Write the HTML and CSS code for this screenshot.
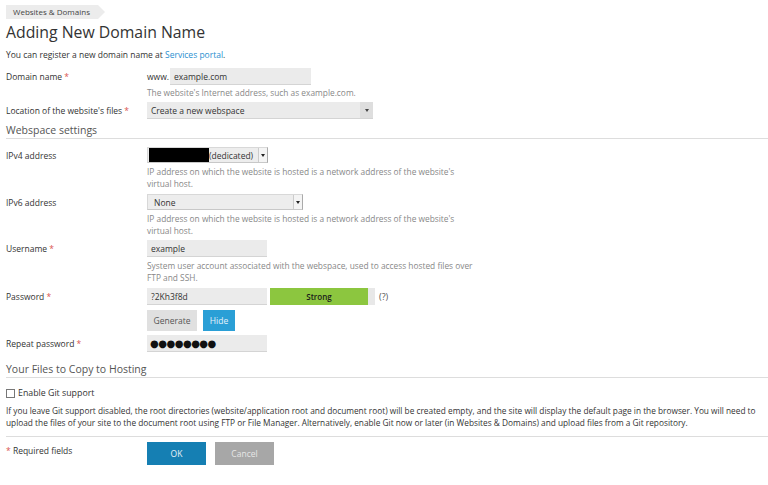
FILE: index.html
```html
<!DOCTYPE html>
<html lang="en">
<head>
<meta charset="utf-8">
<title>Adding New Domain Name</title>
<link rel="stylesheet" href="styles.css">
</head>
<body>
<div class="page">
  <div class="crumbs"><span class="crumb">Websites &amp; Domains</span></div>
  <h1 class="title">Adding New Domain Name</h1>
  <p class="intro">You can register a new domain name at <a class="link" href="#">Services portal</a>.</p>

  <div class="row row-domain">
    <div class="label">Domain name <span class="req">*</span></div>
    <div class="field">
      <div class="inline">
        <span class="prefix">www.</span>
        <div class="input input-domain">example.com</div>
      </div>
      <div class="hint">The website's Internet address, such as example.com.</div>
    </div>
  </div>

  <div class="row row-location">
    <div class="label">Location of the website's files <span class="req">*</span></div>
    <div class="field">
      <div class="select select-location"><span class="sel-text">Create a new webspace</span><span class="sel-arrow"><span class="caret"></span></span></div>
    </div>
  </div>

  <div class="section section-webspace">Webspace settings</div>

  <div class="row row-ipv4">
    <div class="label">IPv4 address</div>
    <div class="field">
      <div class="native native-ipv4"><span class="redact"></span><span class="native-text">(dedicated)</span><span class="native-btn"><span class="caret small"></span></span></div>
      <div class="hint">IP address on which the website is hosted is a network address of the website's<br>virtual host.</div>
    </div>
  </div>

  <div class="row row-ipv6">
    <div class="label">IPv6 address</div>
    <div class="field">
      <div class="native native-ipv6"><span class="native-text pad">None</span><span class="native-btn"><span class="caret small"></span></span></div>
      <div class="hint">IP address on which the website is hosted is a network address of the website's<br>virtual host.</div>
    </div>
  </div>

  <div class="row row-user">
    <div class="label">Username <span class="req">*</span></div>
    <div class="field">
      <div class="input input-std">example</div>
      <div class="hint">System user account associated with the webspace, used to access hosted files over<br>FTP and SSH.</div>
    </div>
  </div>

  <div class="row row-pass">
    <div class="label">Password <span class="req">*</span></div>
    <div class="field">
      <div class="inline">
        <div class="input input-std">?2Kh3f8d</div>
        <div class="strength"><span class="strength-bar">Strong</span><span class="strength-rest"></span></div>
        <span class="qmark">(?)</span>
      </div>
      <div class="btns">
        <span class="btn btn-gen">Generate</span>
        <span class="btn btn-hide">Hide</span>
      </div>
    </div>
  </div>

  <div class="row row-repeat">
    <div class="label">Repeat password <span class="req">*</span></div>
    <div class="field">
      <div class="input input-std dots">&#9679;&#9679;&#9679;&#9679;&#9679;&#9679;&#9679;&#9679;</div>
    </div>
  </div>

  <div class="section section-files">Your Files to Copy to Hosting</div>

  <label class="check"><span class="box"></span>Enable Git support</label>
  <p class="note">If you leave Git support disabled, the root directories (website/application root and document root) will be created empty, and the site will display the default page in the browser. You will need to upload the files of your site to the document root using FTP or File Manager. Alternatively, enable Git now or later (in Websites &amp; Domains) and upload files from a Git repository.</p>

  <div class="footer">
    <div class="label"><span class="req">*</span> Required fields</div>
    <div class="actions">
      <span class="btn-lg btn-ok">OK</span>
      <span class="btn-lg btn-cancel">Cancel</span>
    </div>
  </div>
</div>
</body>
</html>
```

FILE: styles.css
```css
* { box-sizing: border-box; }
html, body { margin: 0; padding: 0; background: #fff; }
body {
  font-family: "Open Sans", "DejaVu Sans", sans-serif;
  font-size: 8.5px;
  color: #333;
}
.page { padding: 5px 0 0 6px; }

.crumbs { height: 14px; }
.crumb {
  display: inline-block;
  position: relative;
  height: 14px;
  line-height: 14px;
  padding: 0 8px 0 7px;
  background: #ececec;
  color: #444;
  font-size: 8px;
}
.crumb::after {
  content: "";
  position: absolute;
  right: -7px;
  top: 0;
  border-top: 7px solid transparent;
  border-bottom: 7px solid transparent;
  border-left: 7px solid #ececec;
}

.title {
  margin: 0;
  font-size: 15.8px;
  font-weight: 400;
  line-height: 24px;
  color: #333;
  margin-top: 1px;
}
.intro { margin: 5px 0 0; line-height: 12px; }
.link { color: #2a8fd0; text-decoration: none; }
.req { color: #d9534f; }

.row {
  display: grid;
  grid-template-columns: 141px 1fr;
}
.label { line-height: 17px; }
.field { display: flex; flex-direction: column; align-items: flex-start; }
.inline { display: flex; align-items: center; }
.hint { color: #888; line-height: 12px; margin-top: 2px; font-size: 8.35px; }

.input {
  height: 17px;
  line-height: 17px;
  background: #ebebeb;
  border-bottom: 1px solid #d4d4d4;
  padding: 0 4px;
  color: #333;
}
.prefix { width: 23px; }
.input-domain { width: 141px; }
.input-std { width: 120px; }

.row-domain { margin-top: 7px; }
.row-location { margin-top: 3px; }

.select {
  display: flex;
  width: 226px;
  height: 17px;
  line-height: 17px;
  background: #ebebeb;
  border-bottom: 1px solid #d4d4d4;
}
.sel-text { flex: 1; padding-left: 4px; }
.sel-arrow {
  width: 13px;
  background: #dedede;
  display: flex; align-items: center; justify-content: center;
}
.caret {
  width: 0; height: 0;
  border-left: 2.5px solid transparent;
  border-right: 2.5px solid transparent;
  border-top: 3px solid #444;
}

.section {
  font-size: 10.5px;
  color: #555;
  line-height: 15px;
  border-bottom: 1px solid #ddd;
}
.section-webspace { margin-top: 4px; }

.row-ipv4 { margin-top: 8px; }
.native {
  display: flex;
  align-items: stretch;
  height: 16px;
  line-height: 15px;
  background: #ededed;
  border: 1px solid #d8d8d8;
  border-right: 1px solid #aaa;
  border-bottom: 1px solid #c8c8c8;
}
.native-ipv4 { width: 121px; }
.native-ipv6 { width: 156px; }
.redact { width: 60px; margin: 0 0 0 1px; background: #000; }
.native-text { flex: 1; color: #333; }
.native-text.pad { padding-left: 6px; }
.native-btn {
  width: 9px;
  background: #f4f4f4;
  border-left: 1px solid #ccc;
  display: flex; align-items: center; justify-content: center;
}
.caret.small { border-left-width: 2px; border-right-width: 2px; border-top-width: 3px; border-top-color: #222; }
.row-ipv4 .hint, .row-ipv6 .hint, .row-user .hint { margin-top: 3px; }

.row-ipv6 { margin-top: 4px; }
.row-user { margin-top: 3px; }
.row-pass { margin-top: 4px; }

.strength {
  display: flex;
  width: 105px;
  height: 17px;
  margin-left: 3px;
}
.strength-bar {
  flex: 1;
  background: #8cc63f;
  text-align: center;
  line-height: 17px;
  color: #1a1a1a;
  font-size: 8px;
  font-weight: 600;
}
.strength-rest { width: 7px; background: #e8e8e8; }
.qmark { margin-left: 4px; font-size: 9px; color: #555; }

.btns { display: flex; gap: 6px; margin-top: 5px; }
.btn {
  display: inline-block;
  height: 21px;
  line-height: 21px;
  padding: 0 6px;
}
.btn-gen { background: #e0e0e0; color: #555; width: 50px; text-align: center; }
.btn-hide { background: #2a9fd6; color: #e6f3fb; width: 32px; text-align: center; }

.row-repeat { margin-top: 4px; }
.dots { font-size: 10px; letter-spacing: -0.5px; color: #111; padding-left: 3px; }

.section-files { margin-top: 10px; }

.check {
  display: flex;
  align-items: center;
  margin-top: 9px;
  line-height: 12px;
  font-size: 8.8px;
}
.box {
  width: 9px; height: 9px;
  border: 1px solid #777;
  background: #fff;
  margin-right: 3px;
}
.note {
  margin: 6px 0 0;
  line-height: 12px;
  font-size: 8.3px;
  padding-bottom: 7px;
  border-bottom: 1px solid #ddd;
}

.footer {
  display: grid;
  grid-template-columns: 141px 1fr;
  margin-top: 5px;
}
.footer .label { line-height: 17px; }
.actions { display: flex; gap: 9px; }
.btn-lg {
  display: inline-block;
  width: 59px;
  height: 23px;
  line-height: 23px;
  text-align: center;
}
.btn-ok { background: #157fb3; color: #e8f2f8; }
.btn-cancel { background: #a7a7a7; color: #e6e6e6; }
```
